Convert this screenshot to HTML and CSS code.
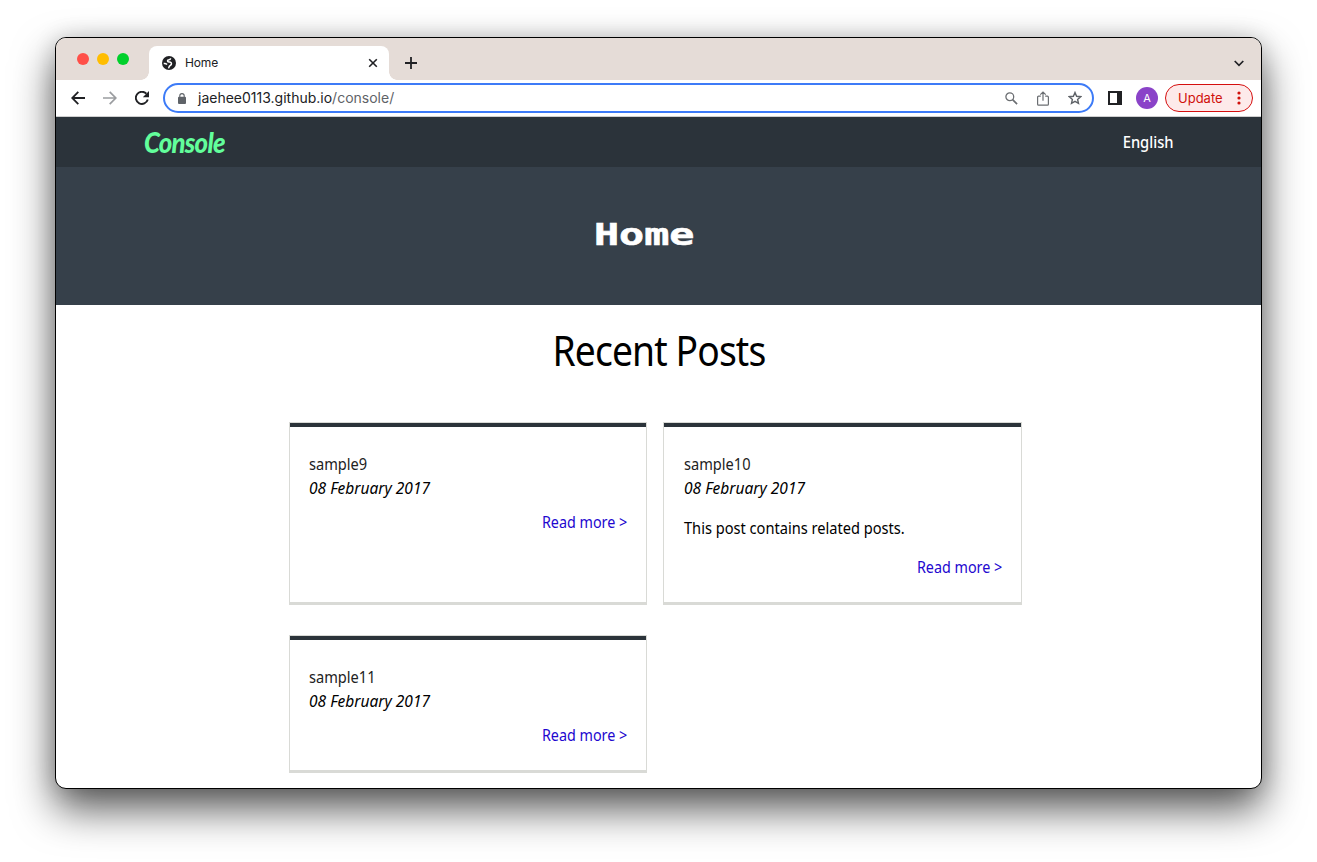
FILE: index.html
```html
<!DOCTYPE html>
<html lang="en">
<head>
<meta charset="utf-8">
<title>Home</title>
<link rel="stylesheet" href="styles.css">
</head>
<body>
<div class="window">
  <div class="tabstrip">
    <div class="lights"><i class="red"></i><i class="yellow"></i><i class="green"></i></div>
    <div class="tab">
      <svg class="globe" width="14" height="14" viewBox="0 0 14 14"><circle cx="7" cy="7" r="7" fill="#202124"/><path d="M8.600 2.200C8.600 3.600 7.600 3.800 6.400 4c-.9.200-.9.800-.7 1.400.3.700 1.100.6 2.100.7 1.500.2 1.900 1.200 1.500 2.300-.5 1.200-1.700 1.300-2.100 2.200-.2.600-.3 1.100-.8 1.600M1.700 7.600c1.200-.2 2.400 0 3.400.9" fill="none" stroke="#fff" stroke-width="1.500"/></svg>
      <span class="tab-title">Home</span>
      <svg class="close" width="10" height="10" viewBox="0 0 10 10"><path d="M1.200 1.200l7.600 7.600M8.800 1.200L1.200 8.800" stroke="#202124" stroke-width="1.600"/></svg>
    </div>
    <svg class="plus" width="12" height="12" viewBox="0 0 12 12"><path d="M6 0v12M0 6h12" stroke="#202124" stroke-width="1.800"/></svg>
    <svg class="chevron" width="10" height="7" viewBox="0 0 10 7"><path d="M.7 1L5 5.300 9.300 1" fill="none" stroke="#202124" stroke-width="1.700"/></svg>
  </div>
  <div class="toolbar">
    <svg class="back" width="14" height="14" viewBox="0 0 14 14"><path d="M14 7H1.500M7.300.8L1.200 7l6.100 6.200" fill="none" stroke="#202124" stroke-width="1.800"/></svg>
    <svg class="forward" width="14" height="14" viewBox="0 0 14 14"><path d="M0 7h12.500M6.700.8L12.800 7l-6.100 6.200" fill="none" stroke="#9b9da0" stroke-width="1.700"/></svg>
    <svg class="reload" width="14" height="14" viewBox="0 0 14 14"><path d="M12.800 8.600A6.100 6.100 0 1 1 11.400 2.700" fill="none" stroke="#202124" stroke-width="1.900"/><path d="M14 0v6.200H7.800z" fill="#202124"/></svg>
    <div class="omnibox">
      <svg class="lock" width="8" height="11" viewBox="0 0 8 11"><rect y="3.800" width="8" height="7.200" rx="1" fill="#5f6368"/><path d="M1.800 4V2.800a2.200 2.200 0 0 1 4.400 0V4" fill="none" stroke="#5f6368" stroke-width="1.100"/></svg>
      <span class="url">jaehee0113.github.io<span class="path">/console/</span></span>
      <svg class="search" width="13" height="13" viewBox="0 0 13 13"><circle cx="4.800" cy="4.800" r="3.900" fill="none" stroke="#6b6e72" stroke-width="1.300"/><path d="M7.600 7.600l4.500 4.500" stroke="#6b6e72" stroke-width="1.600"/></svg>
      <svg class="share" width="12" height="15" viewBox="0 0 12 15"><path d="M3.800 5.200H1.600a1 1 0 0 0-1 1v7a1 1 0 0 0 1 1h8.800a1 1 0 0 0 1-1v-7a1 1 0 0 0-1-1H8.200M6 9.800V1.200M3.300 3.700L6 1l2.700 2.700" fill="none" stroke="#6b6e72" stroke-width="1.200"/></svg>
      <svg class="star" width="14" height="14" viewBox="0 0 14 14"><path d="M7 1.500l1.600 3.800 4.100.4-3.100 2.700.9 4L7 10.300l-3.500 2.100.9-4L1.300 5.700l4.100-.4z" fill="none" stroke="#5f6368" stroke-width="1.400"/></svg>
    </div>
    <svg class="panel" width="14" height="14" viewBox="0 0 14 14"><rect x="1" y="1" width="12" height="12" fill="none" stroke="#202124" stroke-width="2"/><path d="M9 1h4v12H9z" fill="#202124"/></svg>
    <div class="avatar">A</div>
    <div class="update"><span>Update</span><svg width="4" height="14" viewBox="0 0 4 14"><g fill="#d0100b"><circle cx="2" cy="2" r="1.600"/><circle cx="2" cy="7" r="1.600"/><circle cx="2" cy="12" r="1.600"/></g></svg></div>
  </div>
  <nav class="navbar"><span class="brand">Console</span><span class="lang">English</span></nav>
  <header class="hero"><h1>Home</h1></header>
  <main>
    <h2><span>Recent Posts</span></h2>
    <div class="posts">
      <article class="card">
        <div class="title">sample9</div><div class="date">08 February 2017</div>
        <a class="more">Read more &gt;</a>
      </article>
      <article class="card">
        <div class="title">sample10</div><div class="date">08 February 2017</div>
        <p>This post contains related posts.</p>
        <a class="more">Read more &gt;</a>
      </article>
      <article class="card">
        <div class="title">sample11</div><div class="date">08 February 2017</div>
        <a class="more">Read more &gt;</a>
      </article>
    </div>
  </main>
</div>
</body>
</html>
```
FILE: styles.css
```css
* { box-sizing: border-box; }
body { margin: 0; padding: 37px 55px 0; height: 862px; overflow: hidden; background: #fff; font-family: "Noto Sans", sans-serif; }
svg { display: block; flex: none; }
.window { width: 1207px; height: 752px; border: 1px solid #000; border-radius: 11px; overflow: hidden; background: #fff; box-shadow: 0 20px 42px rgba(0,0,0,.66), 0 0 22px rgba(0,0,0,.14); }
.tabstrip { height: 42px; background: #e5dcd7; display: flex; align-items: flex-start; font-family: Inter, sans-serif; }
.lights { display: flex; gap: 8px; padding: 15px 0 0 21px; width: 93px; }
.lights i { width: 12px; height: 12px; border-radius: 50%; }
.red { background: #ff4f48; }
.yellow { background: #ffbd00; }
.green { background: #00d02b; }
.tab { position: relative; width: 240px; height: 34px; margin-top: 8px; background: #fff; border-radius: 8px 8px 0 0; display: flex; align-items: center; padding: 0 11px 0 13px; }
.tab::before, .tab::after { content: ""; position: absolute; bottom: 0; width: 8px; height: 8px; }
.tab::before { left: -8px; background: radial-gradient(circle at 0 0, transparent 7.5px, #fff 8px); }
.tab::after { right: -8px; background: radial-gradient(circle at 100% 0, transparent 7.5px, #fff 8px); }
.tab-title { margin-left: 9px; font-size: 12px; line-height: 16px; letter-spacing: -.15px; color: #202124; flex: 1; }
.plus { margin: 19px 0 0 16px; }
.chevron { margin: 22px 17px 0 auto; }
.toolbar { height: 37px; border-bottom: 1px solid #cfcfcf; display: flex; align-items: center; padding: 0 8px 0 15px; font-family: Inter, sans-serif; }
.forward { margin-left: 18px; }
.reload { margin-left: 18px; }
.omnibox { margin-left: 14px; width: 931px; height: 30px; border: 2px solid #3d7bf7; border-radius: 15px; display: flex; align-items: center; padding: 0 10px 0 13px; }
.url { margin-left: 12px; flex: 1; font-size: 14px; line-height: 18px; letter-spacing: 0; color: #202124; white-space: nowrap; }
.path { color: #5f6368; }
.share { margin-left: 19px; }
.star { margin-left: 19px; }
.panel { margin-left: 14px; }
.avatar { margin-left: 14px; width: 22px; height: 22px; border-radius: 50%; background: #8a43c8; color: #fff; font-size: 11px; line-height: 22px; text-align: center; }
.update { margin-left: 7px; width: 88px; height: 28px; border: 1px solid #d50f0f; border-radius: 14px; background: #fdeaea; color: #d0100b; font-size: 13px; display: flex; align-items: center; justify-content: space-between; padding: 0 11px 0 12px; }
.navbar { height: 50px; background: #2b333a; display: flex; justify-content: space-between; align-items: center; padding: 0 87px 0 88px; color: #fff; font-size: 15.5px; font-weight: 500; }
.brand { font-family: Lato, sans-serif; font-weight: 900; font-style: italic; font-size: 28px; line-height: 38px; letter-spacing: -.8px; color: #62fe9b; transform: scaleX(.92); transform-origin: left; }
.lang { line-height: 24px; transform: scaleX(.95); transform-origin: right; }
.hero { height: 138px; background: #36404a; display: flex; padding: 49px 0 0 538px; }
.hero h1 { margin: 0; font: bold 31px/36px "DejaVu Sans Mono", monospace; color: #fff; -webkit-text-stroke: .6px #fff; transform: scaleX(1.345); transform-origin: left; height: 36px; }
main h2 { margin: 0; height: 117px; padding-top: 16px; font-size: 42px; line-height: 58px; font-weight: 400; letter-spacing: -1px; text-align: center; color: #000; }
main h2 span { display: inline-block; transform: scaleX(.887); }
.posts { display: grid; grid-template-columns: 358px 359px; column-gap: 16px; row-gap: 30px; padding-left: 233px; font-size: 15.5px; line-height: 24px; color: #000; }
.card { border: 1px solid #d9dad6; border-bottom-width: 3px; padding: 0 18px 23px; display: flex; flex-direction: column; align-items: flex-start; }
.card::before { content: ""; align-self: stretch; margin: 0 -18px 25px; height: 4px; background: #2b333a; }
.title, .card p { transform: translateX(1px) scaleX(.942); transform-origin: left; }
.title { color: #222; }
.date { font-style: italic; transform: translateX(1px) scaleX(1.002); transform-origin: left; }
.card:nth-child(2) .title, .card:nth-child(2) .date, .card:nth-child(2) p { margin-left: 1px; }
.card p { margin: 16px 0 5px; white-space: nowrap; }
.more { align-self: flex-end; margin: 10px 1px 0 0; color: #2206cf; transform: scaleX(.925); transform-origin: right; }
```
